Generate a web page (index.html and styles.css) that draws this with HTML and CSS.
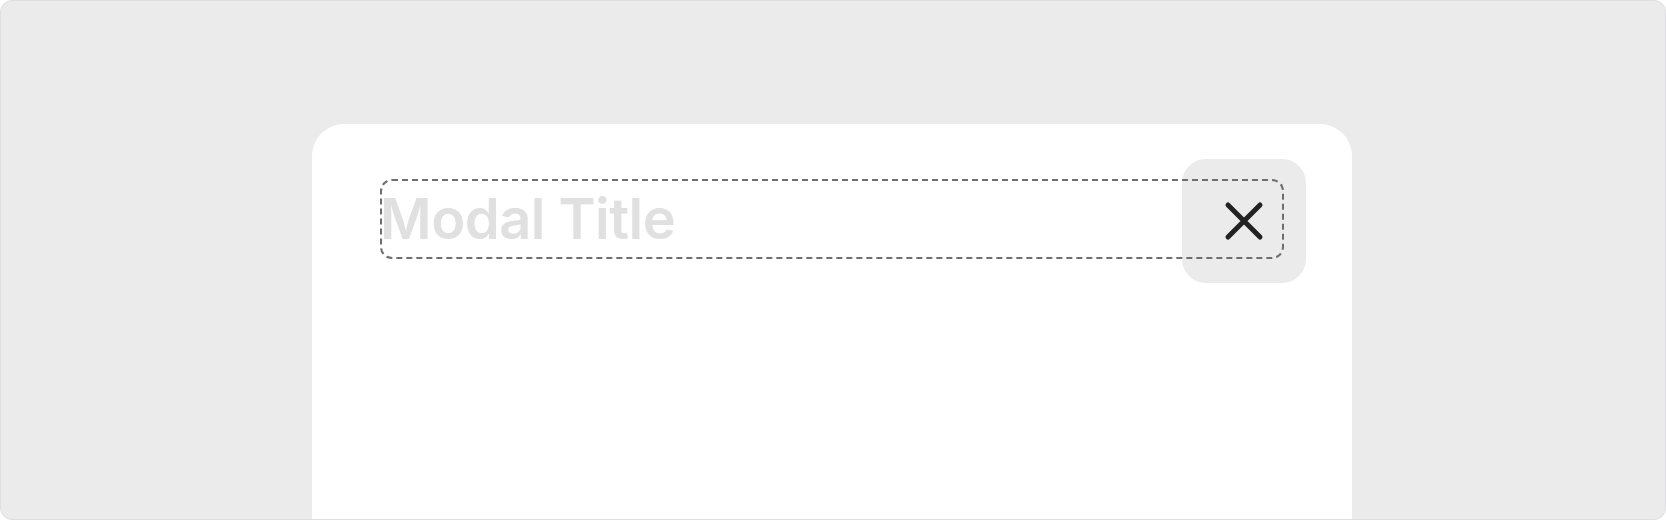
FILE: index.html
```html
<!DOCTYPE html>
<html lang="en">
<head>
<meta charset="utf-8">
<title>Modal</title>
<link rel="stylesheet" href="styles.css">
</head>
<body>
<div class="frame">
  <div class="modal">
    <div class="header">
      <h1 class="title">Modal Title</h1>
      <button class="close" aria-label="Close">
        <svg class="close-icon" viewBox="0 0 40 40" fill="none" stroke="#222222" stroke-width="5" stroke-linecap="round">
          <path d="M4 4 L36 36 M36 4 L4 36"/>
        </svg>
      </button>
    </div>
  </div>
</div>
</body>
</html>
```
FILE: styles.css
```css
* { box-sizing: border-box; }
html, body { margin: 0; padding: 0; background: #ffffff; }
.frame {
  width: 1666px;
  height: 520px;
  border: 1px solid #dedee2;
  border-radius: 12px;
  background: #ebebeb;
  overflow: hidden;
  display: flex;
  justify-content: center;
  padding-top: 123px;
}
.modal {
  width: 1040px;
  height: 100%;
  margin-left: -2px;
  background: #ffffff;
  border-radius: 32px 32px 0 0;
  padding: 55px 68px 0;
}
.header {
  position: relative;
  display: flex;
  align-items: center;
  height: 80px;
}
.header::after {
  content: "";
  position: absolute;
  inset: 0;
  border: 2px dashed #6e6e6e;
  border-radius: 12px;
  pointer-events: none;
}
.title {
  flex: 1;
  margin: 0;
  font-family: Inter, "Noto Sans", sans-serif;
  font-weight: 600;
  font-size: 56px;
  line-height: 80px;
  color: #e0e0e0;
  letter-spacing: -0.5px;
  white-space: nowrap;
}
.close {
  width: 124px;
  height: 124px;
  flex: none;
  margin: -20px -22px -24px 0;
  border: none;
  border-radius: 24px;
  background: #ebebeb;
  display: flex;
  align-items: center;
  justify-content: center;
  padding: 0;
}
.close-icon {
  display: block;
  width: 40px;
  height: 40px;
}
```
